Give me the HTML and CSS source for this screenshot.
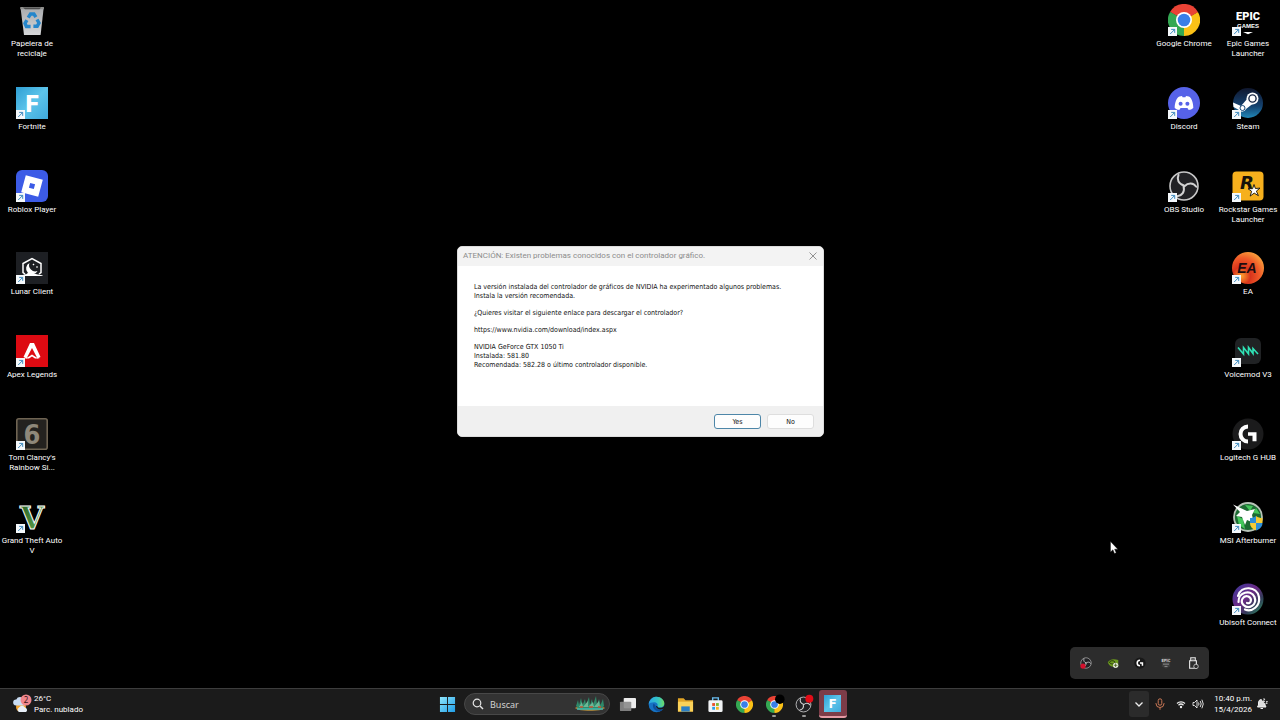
FILE: index.html
```html
<!DOCTYPE html>
<html lang="es">
  <head>
    <meta charset="utf-8" />
    <title>Escritorio</title>
    <link rel="stylesheet" href="styles.css">
  </head>
  <body>
    <!-- iconos compartidos -->
    <svg class="defs" aria-hidden="true">
      <defs>
        <linearGradient id="g-fort" x1="0" y1="0" x2="1" y2="1">
          <stop offset="0" stop-color="#2f9fd4" /><stop offset=".5" stop-color="#5cc4ea" /><stop offset="1" stop-color="#3fa9dc" />
        </linearGradient>
        <linearGradient id="g-win" x1="0" y1="0" x2="1" y2="1">
          <stop offset="0" stop-color="#8fe6fc" /><stop offset="1" stop-color="#1f9ee8" />
        </linearGradient>
        <linearGradient id="g-bin" x1="0" y1="0" x2="0" y2="1">
          <stop offset="0" stop-color="#a9abae" /><stop offset="1" stop-color="#d5d6d8" />
        </linearGradient>
        <linearGradient id="g-steam" x1="0" y1="0" x2="0" y2="1">
          <stop offset="0" stop-color="#10172e" /><stop offset=".6" stop-color="#14416e" /><stop offset="1" stop-color="#2188b8" />
        </linearGradient>
        <radialGradient id="g-ea" cx=".3" cy=".75" r=".8">
          <stop offset="0" stop-color="#ffa22e" /><stop offset=".35" stop-color="#d8341c" /><stop offset=".7" stop-color="#f05a28" /><stop offset="1" stop-color="#f79a3a" />
        </radialGradient>
        <linearGradient id="g-gta" x1="0" y1="0" x2="1" y2="1">
          <stop offset="0" stop-color="#1f5a22" /><stop offset="1" stop-color="#6fb255" />
        </linearGradient>
        <linearGradient id="g-ubi" x1="0" y1="0" x2="1" y2="1">
          <stop offset="0" stop-color="#3a3a9c" /><stop offset=".45" stop-color="#6b2a86" /><stop offset=".7" stop-color="#333c58" /><stop offset="1" stop-color="#2c9a62" />
        </linearGradient>
        <linearGradient id="g-edge" x1="0" y1="0" x2="1" y2="0">
          <stop offset="0" stop-color="#2aa5e8" /><stop offset=".6" stop-color="#35c6c2" /><stop offset="1" stop-color="#6fdc63" />
        </linearGradient>
      </defs>
      <symbol id="i-shortcut" viewBox="0 0 9 9">
        <rect width="9" height="9" fill="#f4f8fb" />
        <path d="M2.2 7 6.4 2.7M3.2 2.4h3.5v3.5" fill="none" stroke="#2b7fb8" stroke-width=".9" />
      </symbol>
      <symbol id="i-chrome" viewBox="0 0 32 32">
        <path d="M16 16 2.1 8A16 16 0 0 1 29.9 8z" fill="#ea4335" />
        <path d="M16 16 29.9 8A16 16 0 0 1 16 32z" fill="#fbc116" />
        <path d="M16 16v16A16 16 0 0 1 2.1 8z" fill="#34a853" />
        <path d="M16 8h13.9L16 16z" fill="#ea4335" />
        <path d="M9.1 20 2.1 8 16 16z" fill="#34a853" />
        <path d="M22.9 20 16 32V16z" fill="#fbc116" />
        <circle cx="16" cy="16" r="8" fill="#fff" />
        <circle cx="16" cy="16" r="6.3" fill="#3a7fe8" />
      </symbol>
      <symbol id="i-obs" viewBox="0 0 32 32">
        <circle cx="16" cy="16" r="14" fill="#222225" stroke="#c9c9c9" stroke-width="1.6" />
        <g fill="none" stroke="#d2d2d2" stroke-width="2" stroke-linecap="round">
          <path id="obs-arm" d="M16 15.5C10.5 14 8.5 9.5 10.5 5" />
          <use href="#obs-arm" transform="rotate(120 16 16)" />
          <use href="#obs-arm" transform="rotate(240 16 16)" />
        </g>
      </symbol>
      <symbol id="i-logi" viewBox="0 0 32 32">
        <path d="M16 8.5A7.5 7.5 0 1 0 16 23.5" fill="none" stroke="#fff" stroke-width="4" />
        <path d="M16 14.2h8.5v9h-4v-5.4H16z" fill="#fff" />
      </symbol>
    </svg>

    <!-- escritorio -->
    <main class="desktop">
      <div class="column">
        <a class="item" href="#">
          <span class="pic"><svg viewBox="0 0 32 32">
            <path d="M4.5 3.8h23.2L24.6 31H8z" fill="url(#g-bin)" />
            <path d="M4.3 3h23.6v2.2H4.3z" fill="#8f8f8d" />
            <path d="M7 3.5h18l-1.5 1.8H9z" fill="#4c4c4c" />
            <g fill="none" stroke="#2586cb" stroke-width="3.4">
              <path d="M12.2 13.6 14.5 10h3.4l2 3.2" />
              <path d="M21 15.5 23 19l-1.8 3.2h-3.8" />
              <path d="M14.6 22.5h-4.2L9 19.4l1.9-3.2" />
            </g>
          </svg></span>
          <span class="name">Papelera de<br>reciclaje</span>
        </a>
        <a class="item" href="#">
          <span class="pic"><svg viewBox="0 0 32 32">
            <rect width="32" height="32" fill="url(#g-fort)" />
            <text x="16" y="25" text-anchor="middle" class="logo-f">F</text>
          </svg><svg class="shortcut"><use href="#i-shortcut" /></svg></span>
          <span class="name">Fortnite</span>
        </a>
        <a class="item" href="#">
          <span class="pic"><svg viewBox="0 0 32 32">
            <rect width="32" height="32" rx="6" fill="#3c5be6" />
            <path d="M9.8 5.2 26.8 9.8 22.2 26.8 5.2 22.2zM14.2 13l-1.3 4.8 4.9 1.3 1.3-4.8z" fill="#fff" fill-rule="evenodd" />
          </svg><svg class="shortcut"><use href="#i-shortcut" /></svg></span>
          <span class="name">Roblox Player</span>
        </a>
        <a class="item" href="#">
          <span class="pic"><svg viewBox="0 0 32 32">
            <rect width="32" height="32" fill="#1d1f23" />
            <path d="M9 22 7 20.5V11.500L16 6.500l9 5v9L23 22" fill="none" stroke="#fff" stroke-width="1.500" />
            <path d="M13.500 11a6 6 0 1 0 8 8 6.200 6.200 0 0 1-8-8z" fill="#fff" />
            <path d="M6 24c2-2.500 4-1 5-2.500 2-1.500 4.500 0 6 .3 2-.8 3 .8 5 .7 2 .2 4 .5 5 1.500z" fill="#fff" />
            <path d="m17.500 11.500 1 1-1 1-1-1zM21 14l1 1-1 1-1-1z" fill="#fff" />
          </svg><svg class="shortcut"><use href="#i-shortcut" /></svg></span>
          <span class="name">Lunar Client</span>
        </a>
        <a class="item" href="#">
          <span class="pic"><svg viewBox="0 0 32 32">
            <rect width="32" height="32" fill="#dd0a12" />
            <path d="M14 8h4l6.500 14-3 1.500L16 13l-5.500 10.500-3-1.500z" fill="#fff" />
            <path d="M8 23.500c3-.5 5.500-2.500 8-4 2.500 1.500 5 3.500 8 4h-5L16 21.500l-3 2z" fill="#fff" />
          </svg><svg class="shortcut"><use href="#i-shortcut" /></svg></span>
          <span class="name">Apex Legends</span>
        </a>
        <a class="item" href="#">
          <span class="pic"><svg viewBox="0 0 32 32">
            <rect x=".8" y=".8" width="30.400" height="30.400" rx="2" fill="#24221f" stroke="#6f6453" stroke-width="1.600" />
            <text x="16" y="26" text-anchor="middle" class="logo-six">6</text>
          </svg><svg class="shortcut"><use href="#i-shortcut" /></svg></span>
          <span class="name">Tom Clancy's<br>Rainbow Si...</span>
        </a>
        <a class="item" href="#">
          <span class="pic"><svg viewBox="0 0 32 32">
            <text x="16" y="28" text-anchor="middle" class="logo-v">V</text>
          </svg><svg class="shortcut"><use href="#i-shortcut" /></svg></span>
          <span class="name">Grand Theft Auto<br>V</span>
        </a>
      </div>

      <div class="column-group">
        <div class="column">
          <a class="item" href="#">
            <span class="pic"><svg><use href="#i-chrome" /></svg><svg class="shortcut"><use href="#i-shortcut" /></svg></span>
            <span class="name">Google Chrome</span>
          </a>
          <a class="item" href="#">
            <span class="pic"><svg viewBox="0 0 32 32">
              <circle cx="16" cy="16" r="16" fill="#5662e8" />
              <path d="M11.500 9.500 14 9l.6 1.200h2.800L18 9l2.800.5c2.700 1 4.600 6.500 4.500 11.500-1.400 1.200-3 1.900-4.600 2l-1.300-2h-6.800l-1.300 2c-1.600-.1-3.200-.8-4.600-2 0-5 1.800-10.500 4.800-11.500z" fill="#fff" />
              <circle cx="12.600" cy="16.800" r="2" fill="#5662e8" />
              <circle cx="19.400" cy="16.800" r="2" fill="#5662e8" />
            </svg><svg class="shortcut"><use href="#i-shortcut" /></svg></span>
            <span class="name">Discord</span>
          </a>
          <a class="item" href="#">
            <span class="pic"><svg><use href="#i-obs" /></svg><svg class="shortcut"><use href="#i-shortcut" /></svg></span>
            <span class="name">OBS Studio</span>
          </a>
        </div>
        <div class="column">
          <a class="item" href="#">
            <span class="pic"><svg viewBox="0 0 32 32">
              <text x="16" y="16" text-anchor="middle" class="logo-epic">EPIC</text>
              <text x="16" y="24" text-anchor="middle" class="logo-games">GAMES</text>
              <path d="M11 28h10l-5 2.200z" fill="#fff" />
            </svg><svg class="shortcut"><use href="#i-shortcut" /></svg></span>
            <span class="name">Epic Games<br>Launcher</span>
          </a>
          <a class="item" href="#">
            <span class="pic"><svg viewBox="0 0 32 32">
              <circle cx="16" cy="16" r="15" fill="url(#g-steam)" />
              <path d="M1 15.500 9 19l6.500-7.500 5 5.500-6.500 5a4 4 0 0 1-7 1L1.500 20z" fill="#fff" />
              <circle cx="20.500" cy="11.500" r="6" fill="#fff" />
              <circle cx="20.500" cy="11.500" r="3.600" fill="#fff" stroke="#1a2946" stroke-width="1.400" />
              <circle cx="10.500" cy="21" r="2.500" fill="none" stroke="#1a4a78" />
            </svg><svg class="shortcut"><use href="#i-shortcut" /></svg></span>
            <span class="name">Steam</span>
          </a>
          <a class="item" href="#">
            <span class="pic"><svg viewBox="0 0 32 32">
              <rect x=".5" y="1.500" width="31" height="29" rx="4" fill="#f6b01d" />
              <text x="15" y="19" text-anchor="middle" class="logo-r">R</text>
              <path d="m22 14.500 1.400 4 4.600-.4-3.600 3 2 4.600-4.200-2.600-4 3 1.400-4.800-3.600-2.600h4.600z" fill="#fff" stroke="#15110a" stroke-width=".9" />
            </svg><svg class="shortcut"><use href="#i-shortcut" /></svg></span>
            <span class="name">Rockstar Games<br>Launcher</span>
          </a>
          <a class="item" href="#">
            <span class="pic"><svg viewBox="0 0 32 32">
              <circle cx="16" cy="16" r="16" fill="url(#g-ea)" />
              <text x="15" y="21" text-anchor="middle" class="logo-ea">EA</text>
            </svg><svg class="shortcut"><use href="#i-shortcut" /></svg></span>
            <span class="name">EA</span>
          </a>
          <a class="item" href="#">
            <span class="pic"><svg viewBox="0 0 32 32">
              <rect x="3" y="3" width="26" height="26" rx="6" fill="#202224" />
              <path d="M6 12.500l5.500 6.500v-6.500l5 6.500v-6.500l4.500 6v-5l5 5.500" fill="none" stroke="#2fe3b6" stroke-width="1.600" />
            </svg><svg class="shortcut"><use href="#i-shortcut" /></svg></span>
            <span class="name">Voicemod V3</span>
          </a>
          <a class="item" href="#">
            <span class="pic"><svg viewBox="0 0 32 32"><circle cx="16" cy="16" r="15.500" fill="#1b1b1c" /><use href="#i-logi" /></svg><svg class="shortcut"><use href="#i-shortcut" /></svg></span>
            <span class="name">Logitech G HUB</span>
          </a>
          <a class="item" href="#">
            <span class="pic"><svg viewBox="0 0 32 32">
              <circle cx="16" cy="16" r="14" fill="#1d6b33" stroke="#b8c4b8" stroke-width="1.800" />
              <path d="M13 4l8 1-3 5zM24 7l4 6-7-1zM5 15l6 3 2 10-6-4z" fill="#43c75a" />
              <path d="M1 3.500 15 10l8-2-3 6 2 8-7-3-2 5-3-8-6-1 4-4z" fill="#fff" />
              <path d="M24 15v7h-6v-5c2 0 4-.6 6-2z" fill="#2d8fd8" />
              <path d="M24 15c2 1.400 4 2 6.500 2v5H24z" fill="#f5cb35" />
              <path d="M24 22v7.500c-4-1.600-6-4-6-7.500z" fill="#f5cb35" />
              <path d="M24 22h6.500c0 3.500-2.500 6-6.500 7.500z" fill="#2d8fd8" />
            </svg><svg class="shortcut"><use href="#i-shortcut" /></svg></span>
            <span class="name">MSI Afterburner</span>
          </a>
          <a class="item" href="#">
            <span class="pic"><svg viewBox="0 0 32 32">
              <circle cx="16" cy="16" r="15.500" fill="url(#g-ubi)" />
              <g fill="none" stroke="#fff" stroke-width="2.200" stroke-linecap="round">
                <path d="M6 13C9 2 25 3 27 14c1.500 9-7 15.500-14 12.500" />
                <path d="M6.500 19C6 9 19 6 22.500 14c3 8-6 13-11 8-4-4 0-10.500 5-8.500 4.500 2.500 2 8-1.500 6.500" />
              </g>
            </svg><svg class="shortcut"><use href="#i-shortcut" /></svg></span>
            <span class="name">Ubisoft Connect</span>
          </a>
        </div>
      </div>

      <!-- aviso del controlador -->
      <section class="dialog" role="dialog" aria-labelledby="dialog-title">
        <header class="dialog-head">
          <h1 id="dialog-title">ATENCIÓN: Existen problemas conocidos con el controlador gráfico.</h1>
          <button class="close" type="button" aria-label="Cerrar">
            <svg viewBox="0 0 8 8"><path d="M.5.5l7 7M7.500.5l-7 7" fill="none" stroke="#777" stroke-width=".8" /></svg>
          </button>
        </header>
        <div class="dialog-body">
          <p>La versión instalada del controlador de gráficos de NVIDIA ha experimentado algunos problemas.<br>Instala la versión recomendada.</p>
          <p>¿Quieres visitar el siguiente enlace para descargar el controlador?</p>
          <p>https://www.nvidia.com/download/index.aspx</p>
          <p>NVIDIA GeForce GTX 1050 Ti<br>Instalada: 581.80<br>Recomendada: 582.28 o último controlador disponible.</p>
        </div>
        <footer class="dialog-foot">
          <button class="btn btn-default" type="button">Yes</button>
          <button class="btn" type="button">No</button>
        </footer>
      </section>

      <!-- iconos ocultos -->
      <div class="flyout">
        <button type="button" aria-label="OBS"><svg viewBox="0 0 32 32"><use href="#i-obs" /><circle cx="8" cy="24" r="7" fill="#d3122e" /></svg></button>
        <button type="button" aria-label="NVIDIA"><svg viewBox="0 0 32 32">
          <path d="M2 14C8 5 18 4 30 8v18H16C8 25 4 20 2 14z" fill="#6c9a1e" />
          <path d="M6 14c5-6 12-5 16 0-4 6-11 6-16 0z" fill="none" stroke="#20300a" stroke-width="2.500" />
          <circle cx="23" cy="22" r="7" fill="#e9eee0" /><path d="M23 17v10M18 22h10" stroke="#39520f" stroke-width="2" />
        </svg></button>
        <button type="button" aria-label="Logitech"><svg viewBox="0 0 32 32"><circle cx="16" cy="16" r="15" fill="#181818" /><use href="#i-logi" /></svg></button>
        <button type="button" aria-label="Epic"><svg viewBox="0 0 32 32">
          <path d="M5 2h22v23l-11 6-11-6z" fill="#3b3b3b" />
          <text x="16" y="14" text-anchor="middle" class="logo-mini">EPIC</text>
          <path d="M8 19h16M12 25h8" stroke="#aaa" stroke-width="2" />
        </svg></button>
        <button type="button" aria-label="USB"><svg viewBox="0 0 32 32">
          <path d="M10 10V2h12v8M7 10h18v20H7z" fill="none" stroke="#e8e8e8" stroke-width="3" />
          <path d="M14 5v2M18 5v2" stroke="#e8e8e8" stroke-width="2" />
          <circle cx="24" cy="25" r="6" fill="#2c2c2c" stroke="#ddd" stroke-width="2" />
        </svg></button>
      </div>

      <svg class="cursor" viewBox="0 0 8 13"><path d="M.5.500v10.500l2.400-2.200 1.600 3.700 1.700-.8-1.600-3.500h3.200z" fill="#fff" stroke="#111" stroke-width=".4" /></svg>
    </main>

    <!-- barra de tareas -->
    <footer class="taskbar">
      <button class="weather" type="button">
        <svg viewBox="0 0 20 20">
          <circle cx="9" cy="13" r="5" fill="#f3a531" />
          <path d="M4 11.500a3 3 0 0 1 .3-6 4 4 0 0 1 7.400 0A3 3 0 0 1 12 11.500z" fill="#c9dcf2" />
          <path d="M7 18a2.500 2.500 0 0 1 0-4.500 3.500 3.500 0 0 1 6 0 2.500 2.500 0 0 1 1 4.500z" fill="#e8eff8" />
          <circle cx="14" cy="6" r="5.500" fill="#f0868c" />
          <text x="14" y="9" text-anchor="middle" class="count">2</text>
        </svg>
        <span>26°C<br>Parc. nublado</span>
      </button>

      <nav class="apps">
        <button class="app" type="button" aria-label="Inicio"><svg viewBox="0 0 18 18">
          <path d="M1 1h7.500v7.500H1zM9.500 1H17v7.500H9.500zM1 9.500h7.500V17H1zM9.500 9.500H17V17H9.500z" fill="url(#g-win)" />
        </svg></button>
        <label class="search">
          <svg viewBox="0 0 12 12"><circle cx="5" cy="5" r="3.800" fill="none" stroke="#e6e6e6" stroke-width="1.200" /><path d="m8 8 3 3" stroke="#e6e6e6" stroke-width="1.400" /></svg>
          <input type="text" placeholder="Buscar" aria-label="Buscar">
          <svg class="scene" viewBox="0 0 32 18">
            <path d="M1 13C5 9 27 9 31 13c-3 4-27 4-30 0z" fill="#9a7b3a" />
            <path d="M2 11 4 5l1 5 2-7 1.500 7L11 4l1 6 3-8 1 8 2-6 1 6 3-9 1 9 2-6 1.500 6L29 4l1 7-3 3H5z" fill="#2f8a6a" />
            <path d="M5 12l3-5 1 5 5-6 0 6 5-5 1 5 5-6 1 6z" fill="#6cb795" />
            <path d="M3 14h26" stroke="#3cb9b0" stroke-width="1.500" />
            <path d="M6 12h3M15 12h4M24 12h3" stroke="#c55332" stroke-width="1.400" />
          </svg>
        </label>
        <div class="pinned">
          <button class="app" type="button" aria-label="Vista de tareas"><svg viewBox="0 0 18 18">
            <rect x="5" y="2" width="13" height="11" rx="1" fill="#ececec" /><rect x="1" y="6" width="12" height="10" rx="1" fill="#8b8b8b" fill-opacity=".9" />
          </svg></button>
          <button class="app" type="button" aria-label="Edge"><svg viewBox="0 0 18 18">
            <circle cx="9" cy="9" r="8.300" fill="#1673c4" />
            <path d="M.8 8.500C1.500 3.500 5 .7 9 .7c5 0 8.300 3.600 8.300 7.300 0 3-2.300 4.300-4.800 4.300-2 0-3-.8-2.500-1.800C11 8.300 9 6.500 6.500 6.500 3.500 6.500 1.300 7.500.8 8.500z" fill="url(#g-edge)" />
            <path d="M6 8c-2 3 0 7.500 5 8.500 2.500 0 4.500-1.500 5.500-3-4 2-9 .5-8.500-3.500z" fill="#0c4f9c" />
            <path d="M10 10.500c-.6 1.200.8 1.900 2.800 1.900 2 0 4-.8 4.500-2.400v2.500l-1.200 1.200c-4 1.400-7.500-.2-7.600-3.200z" fill="#1a1a1a" />
          </svg></button>
          <button class="app" type="button" aria-label="Explorador"><svg viewBox="0 0 18 18">
            <path d="M1 2.500h6l2 2h8v12H1z" fill="#e2a526" /><path d="M1 6h16v10.500H1z" fill="#fbd259" /><path d="M4.500 11h9v5.500h-9z" fill="#2c7fc4" />
          </svg></button>
          <button class="app" type="button" aria-label="Tienda"><svg viewBox="0 0 18 18">
            <path d="M6 5V2h6v3" fill="none" stroke="#69bdf0" stroke-width="1.500" /><rect x="1.500" y="4.500" width="15" height="12.500" rx="1.500" fill="#f1f3f5" />
            <path d="M5.500 7.500h3v3h-3z" fill="#e8502a" /><path d="M9.500 7.500h3v3h-3z" fill="#7cb82f" /><path d="M5.500 11.500h3v3h-3z" fill="#2b9fe6" /><path d="M9.500 11.500h3v3h-3z" fill="#f7b61b" />
          </svg></button>
          <button class="app" type="button" aria-label="Chrome"><svg viewBox="0 0 32 32"><use href="#i-chrome" /></svg></button>
          <button class="app running" type="button" aria-label="Chrome"><svg viewBox="0 0 32 32"><use href="#i-chrome" /><circle cx="26" cy="6" r="9" fill="#000" /></svg></button>
          <button class="app running" type="button" aria-label="OBS Studio"><svg viewBox="0 0 32 32"><use href="#i-obs" /><circle cx="27" cy="5" r="7.500" fill="#e30c17" /></svg></button>
          <button class="app active" type="button" aria-label="Fortnite"><svg viewBox="0 0 32 32">
            <rect width="32" height="32" fill="url(#g-fort)" />
            <text x="16" y="25" text-anchor="middle" class="logo-f">F</text>
          </svg></button>
        </div>
      </nav>

      <div class="tray">
        <button class="chevron" type="button" aria-label="Iconos ocultos"><svg viewBox="0 0 12 12"><path d="m2.500 4.500 3.500 3.500 3.500-3.500" fill="none" stroke="#eee" stroke-width="1.300" /></svg></button>
        <button class="mic" type="button" aria-label="Micrófono"><svg viewBox="0 0 12 12"><g fill="none" stroke="#c97755"><rect x="4.200" y=".8" width="3.600" height="6.400" rx="1.800" /><path d="M2 5v.5a4 4 0 0 0 8 0V5M6 9.500v2.300" /></g></svg></button>
        <button class="status" type="button" aria-label="Red y volumen">
          <svg viewBox="0 0 12 12"><path d="M2 5.500a5.800 5.800 0 0 1 8 0M3.500 7.200a3.600 3.600 0 0 1 5 0" fill="none" stroke="#eee" stroke-width="1.200" /><circle cx="6" cy="9" r="1.200" fill="#eee" /></svg>
          <svg viewBox="0 0 12 12"><path d="M1 4.500h1.500L5 2v8L2.500 7.500H1zM6.500 4.500q1 1.500 0 3M8.200 3q2 3 0 6M9.900 1.700q2.700 4.300 0 8.600" fill="none" stroke="#eee" stroke-width=".9" /></svg>
        </button>
        <button class="clock" type="button">10:40 p.m.<br>15/4/2026</button>
        <button class="bell" type="button" aria-label="Notificaciones"><svg viewBox="0 0 12 12"><path d="M5.500 1.500C3.300 1.500 2.500 3 2.500 5v2L1.500 9h8.500L9 7V5.500M4.500 10.500h2.500" fill="#ddd" stroke="#eee" stroke-width="1" /><path d="M7 1h2L7 3.500h2M10 3.500h1.500L10 5.500h1.500" fill="none" stroke="#fff" stroke-width=".7" /></svg></button>
      </div>
    </footer>
  </body>
</html>
```
FILE: styles.css
```css
* {
  box-sizing: border-box;
}
body {
  margin: 0;
  height: 100vh;
  display: flex;
  flex-direction: column;
  overflow: hidden;
  background-color: #000;
  color: #fff;
  font-family: Roboto, "Noto Sans", sans-serif;
  font-size: 8px;
}
button {
  margin: 0;
  padding: 0;
  border: none;
  background: none;
  color: inherit;
  font: inherit;
}
svg {
  display: block;
  overflow: visible;
}
.defs {
  position: absolute;
  width: 0;
  height: 0;
}

/* escritorio */
.desktop {
  position: relative;
  flex: 1;
  display: flex;
  justify-content: space-between;
  padding: 4px 0 22px;
}
.column-group {
  display: flex;
}
.column {
  display: grid;
  grid-template-columns: 64px;
  grid-template-rows: repeat(8, 1fr);
}
.item {
  display: flex;
  flex-direction: column;
  align-items: center;
  gap: 3px;
  color: #fff;
  text-decoration: none;
}
.pic {
  position: relative;
}
.pic svg {
  width: 32px;
  height: 32px;
}
.pic .shortcut {
  position: absolute;
  left: 0;
  bottom: 0;
  width: 9px;
  height: 9px;
}
.name {
  line-height: 10px;
  text-align: center;
  white-space: nowrap;
}

/* letras de los logos */
.logo-f {
  font: 900 24px Roboto, "Liberation Sans", sans-serif;
  fill: #fff;
}
.logo-v {
  font: bold 31px "DejaVu Serif", serif;
  fill: url(#g-gta);
  stroke: #fff;
  stroke-width: 1px;
}
.logo-six {
  font: bold 27px "DejaVu Sans Condensed", sans-serif;
  fill: #8f887a;
}
.logo-epic {
  font: 900 11px Roboto, "Liberation Sans", sans-serif;
  fill: #fff;
}
.logo-games {
  font: bold 6px "Liberation Sans", sans-serif;
  fill: #fff;
}
.logo-r {
  font: italic bold 18px "DejaVu Sans", sans-serif;
  fill: #15110a;
}
.logo-ea {
  font: italic bold 14px "Liberation Sans", sans-serif;
  fill: #1d0c10;
}
.logo-mini {
  font: bold 10px "Liberation Sans", sans-serif;
  fill: #ddd;
}

/* aviso */
.dialog {
  position: absolute;
  left: 457px;
  top: 246px;
  width: 367px;
  border: 1px solid #dcdcdc;
  border-radius: 5px;
  overflow: hidden;
  background-color: #fff;
  color: #111;
  font-family: "DejaVu Sans Condensed", "DejaVu Sans", sans-serif;
  font-size: 7px;
}
.dialog-head {
  display: flex;
  justify-content: space-between;
  align-items: center;
  height: 19px;
  padding: 0 6px 2px 5px;
  background-color: #f3f3f3;
}
.dialog-head h1 {
  margin: 0;
  color: #8c8c8c;
  font-family: Roboto, "Noto Sans", sans-serif;
  font-size: 8px;
  font-weight: normal;
}
.close svg {
  width: 8px;
  height: 8px;
}
.dialog-body {
  height: 140px;
  padding: 17px 16px 0;
  line-height: 9px;
  white-space: nowrap;
}
.dialog-body p {
  margin: 0 0 8px;
}
.dialog-foot {
  display: flex;
  justify-content: flex-end;
  gap: 6px;
  padding: 8px 9px 7px;
  background-color: #f0f0f0;
}
.btn {
  width: 47px;
  height: 15px;
  border: 1px solid #dedede;
  border-radius: 3px;
  background-color: #fdfdfd;
}
.btn-default {
  border-color: #4d86a8;
}

/* iconos ocultos */
.flyout {
  position: absolute;
  right: 71px;
  bottom: 9px;
  display: flex;
  justify-content: space-between;
  width: 139px;
  padding: 10px;
  border-radius: 5px;
  background-color: #2c2c2c;
}
.flyout svg {
  width: 12px;
  height: 12px;
}
.cursor {
  position: absolute;
  left: 1110px;
  top: 541px;
  width: 8px;
  height: 13px;
}

/* barra de tareas */
.taskbar {
  display: grid;
  grid-template-columns: 1fr auto 1fr;
  align-items: center;
  height: 32px;
  padding-bottom: 1px;
  border-top: 1px solid #3d3d3d;
  background-color: #1b1b1b;
}
.weather {
  display: flex;
  align-items: center;
  gap: 2px;
  padding-left: 12px;
  line-height: 11px;
  text-align: left;
}
.weather svg {
  width: 20px;
  height: 20px;
}
.count {
  font: 8px "Noto Sans", sans-serif;
  fill: #3a1518;
}
.apps {
  display: flex;
  align-items: center;
  gap: 3px;
}
.app {
  position: relative;
  display: flex;
  justify-content: center;
  align-items: center;
  width: 28px;
  height: 28px;
  border-radius: 3px;
}
.app svg {
  width: 17px;
  height: 17px;
}
.running::after {
  content: "";
  position: absolute;
  bottom: 1px;
  width: 4px;
  height: 2px;
  border-radius: 1px;
  background-color: #9a9a9a;
}
.active {
  background-color: #7c3c48;
  border-bottom: 2px solid #e59aa4;
}
.search {
  display: flex;
  align-items: center;
  gap: 6px;
  width: 146px;
  height: 22px;
  padding: 0 3px 0 7px;
  border: 1px solid #484848;
  border-radius: 11px;
  background-color: #333;
}
.search svg {
  flex: none;
  width: 12px;
  height: 12px;
}
.search .scene {
  width: 32px;
  height: 18px;
}
.search input {
  flex: 1;
  min-width: 0;
  padding: 0;
  border: none;
  outline: none;
  background: none;
  color: #fff;
  font: 9px "Noto Sans", sans-serif;
}
.search input::placeholder {
  color: #d2d2d2;
}
.pinned {
  display: flex;
  justify-content: space-between;
  width: 234px;
}
.tray {
  display: flex;
  justify-content: flex-end;
  align-items: center;
  padding-right: 12px;
}
.tray svg {
  width: 12px;
  height: 12px;
}
.chevron {
  padding: 7px 4px;
  border-radius: 3px;
  background-color: #2b2b2b;
}
.mic {
  margin: 0 9px 0 5px;
}
.status {
  display: flex;
  gap: 5px;
}
.clock {
  margin: 0 4px 0 10px;
  line-height: 11px;
  text-align: right;
}
```
